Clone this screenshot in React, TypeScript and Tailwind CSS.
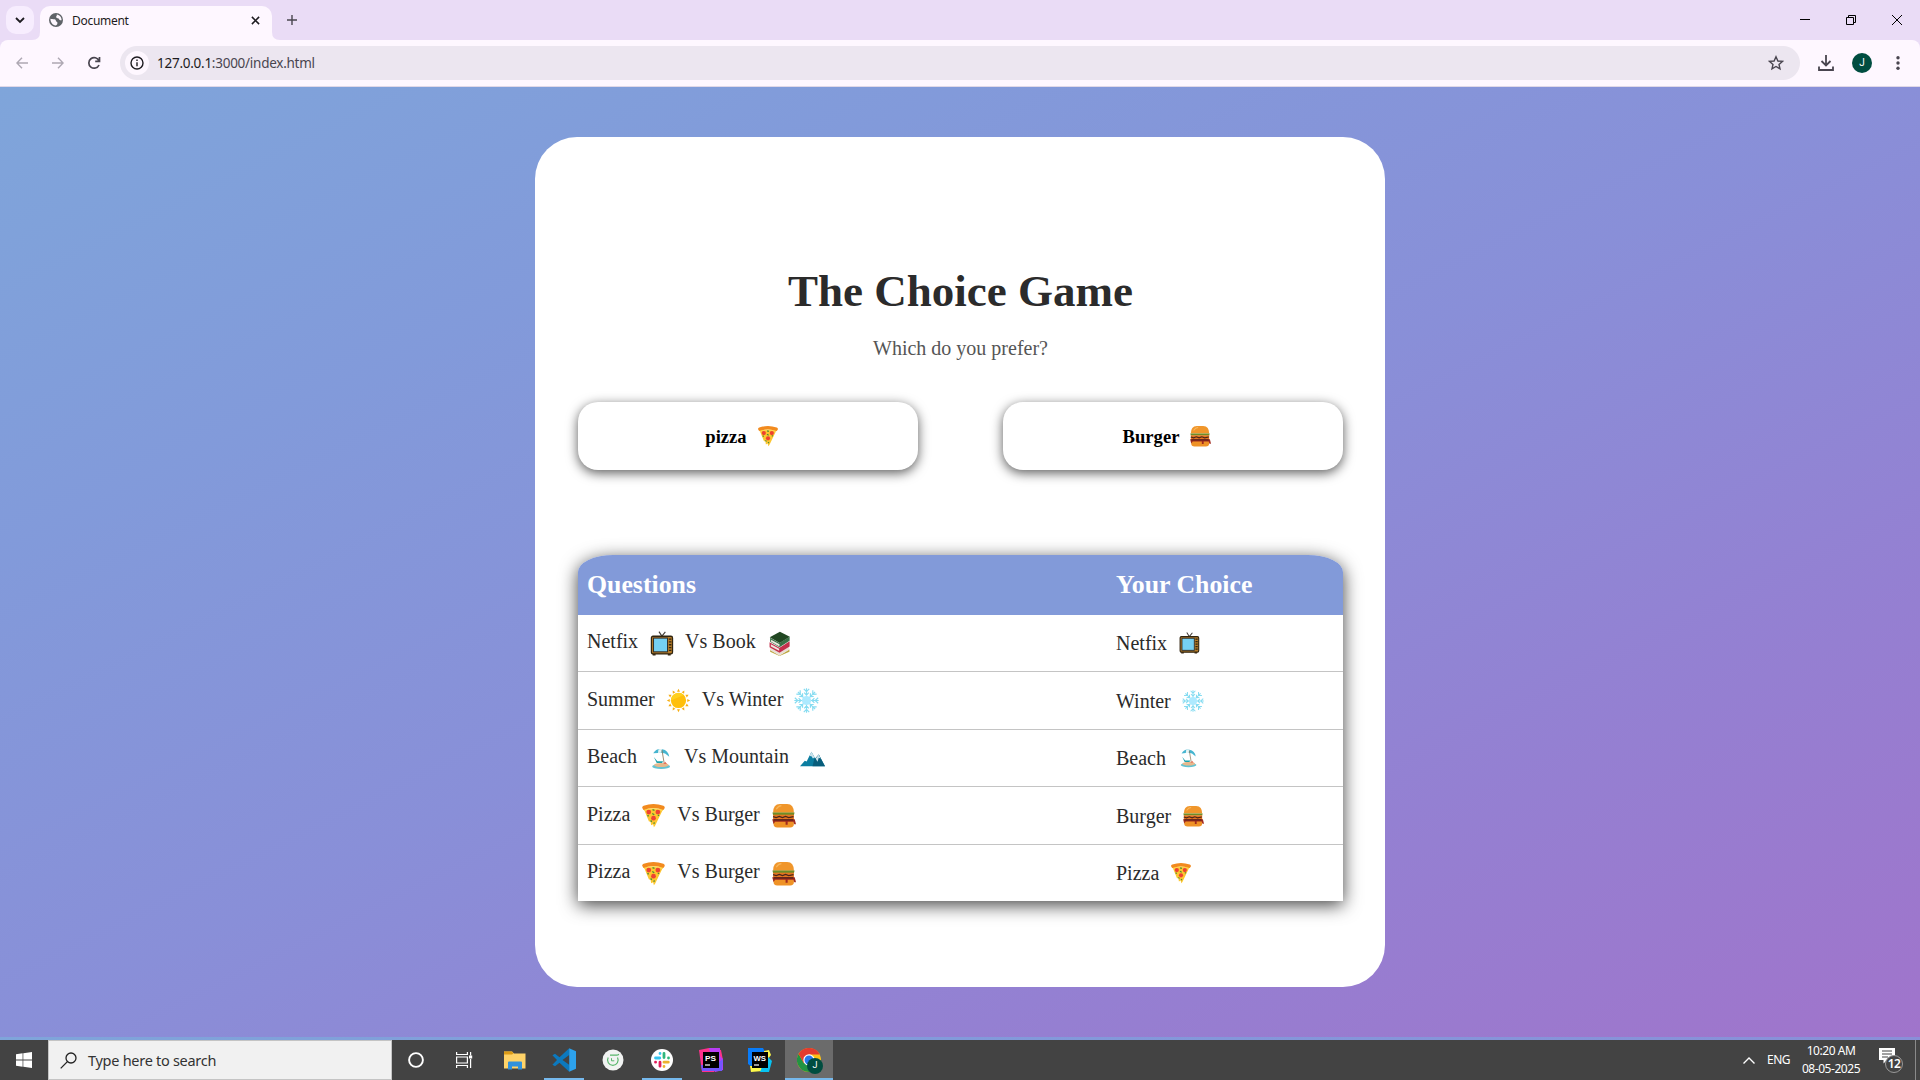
import React from "react";

const serif = "font-['Liberation_Serif',serif]";

type IconName = "pizza" | "burger" | "tv" | "book" | "sun" | "snow" | "beach" | "mountain";

function Pizza() {
  return (
    <g transform="translate(.6 .4) scale(.95 .97)">
      <path d="M2 5 L22 5 L13.6 22 L12.4 23.5 L11.6 20.5 L9.6 21.5 L9 18 L7.4 18 Z" fill="#fdc62f" />
      <path d="M.6 4.4 Q.4 3 2 2.4 Q12-1 22 2.4 Q23.8 3.1 23.2 4.8 L22 6.4 Q12 2.8 1.8 6.4 Z" fill="#f28a1e" />
      <path d="M2.6 7 Q12 3.4 21.4 7" fill="none" stroke="#ffd95a" strokeWidth="1" />
      <circle cx="7.2" cy="8.6" r="2.4" fill="#ee4232" />
      <circle cx="16.4" cy="8.6" r="2.4" fill="#ee4232" />
      <circle cx="12" cy="14.6" r="2.4" fill="#ee4232" />
      <path d="M11 6.2l2 .6M10.8 10l2 1.2M5.8 11.8l1.4.8M16.4 12.2l1.2-.8M9 17l1.4 1M12 19.8l1.2-.8" stroke="#4b8b35" strokeWidth="1.3" />
    </g>
  );
}

function Burger() {
  return (
    <>
      <rect x="2.4" y="16" width="19.6" height="7.4" rx="3.6" fill="#ef9226" />
      <path d="M2 9.4 Q2 1 8.500 1 H15.500 Q22 1 22 9.400 Z" fill="#f0962b" />
      <path d="M5 6 Q7 2.8 10 2.6" fill="none" stroke="#f8b65b" strokeWidth="1.2" />
      <path d="M1.4 9.2 H22.6 L22 11.4 H2 Z" fill="#6c8d29" />
      <path d="M2 11.2 H22 V16 H2 Z" fill="#e5761f" />
      <path d="M2 13 l3 1 3-1.2 3 1.2 3-1.2 3 1.2 4.6-1" fill="none" stroke="#4a251b" strokeWidth="1.2" />
      <path d="M1.2 15.6 H22.8 L24 20.4 H22.4 L21.4 18 H16 V20.8 H14 V18 H4 L2.4 20.2 Z" fill="#a12a1f" />
      <path d="M2.500 16.2 H21.500" stroke="#522019" strokeWidth="1.3" />
    </>
  );
}

function Tv() {
  return (
    <g transform="translate(1.200 0) scale(.93 1)">
      <path d="M9 .6 L12 5 L15.6 .8" fill="none" stroke="#443f3a" strokeWidth="1.2" />
      <path d="M4 21.5v2M19.6 21.5v2" stroke="#3b2b18" strokeWidth="3" />
      <rect x="1.2" y="5" width="21.8" height="17" rx="1.6" fill="#b37a28" stroke="#30240f" strokeWidth="1.3" />
      <rect x="3.4" y="6.8" width="14.4" height="13.2" fill="#75d0f2" stroke="#2f2d2a" strokeWidth="1" />
      <path d="M19.200 7.800h2.600M19.200 10.400h2.600M19.200 13.200h2.600M19.200 16h2.600M19.200 18.600h2.600" stroke="#33260f" strokeWidth="1.3" />
    </g>
  );
}

function Book() {
  return (
    <g transform="translate(1.200 0) scale(.9 1)">
      <path d="M2 18 L12 23.6 L22.6 17.6 V19.8 L12 24 L2 20 Z" fill="#bda842" />
      <path d="M2 15.6 L12 20.6 L22.4 15 V18 L12 23.4 L2 18.4 Z" fill="#e9dfd5" />
      <path d="M1.4 10.8 L12 16 L22.8 9.8 V14.8 L12 20.8 L1.4 15.6 Z" fill="#c3304b" />
      <path d="M2.8 12.600 L11.6 17 V19 L2.8 14.8 Z" fill="#f0e5df" />
      <path d="M2 6.4 L12 11.4 L22.8 5.6 V9.4 L12 15.6 L2 10.2 Z" fill="#387145" />
      <path d="M3 8.400 L12 12.800 L12 14.8 L3 10.2 Z" fill="#eae8df" />
      <path d="M1.6 6 L12.4 .6 L23 5.4 L12.2 11.6 Z" fill="#214722" />
    </g>
  );
}

function Sun() {
  return (
    <>
      {[0, 30, 60, 90, 120, 150, 180, 210, 240, 270, 300, 330].map((a) => (
        <path key={a} d="M12 .8 L13.4 3.6 H10.6 Z" fill="#f7ae12" transform={`rotate(${a} 12 12)`} />
      ))}
      <circle cx="12" cy="12" r="7.3" fill="#ffbf0b" />
      <path d="M4.700 12 A7.3 7.3 0 0 1 17.2 6.8 Z" fill="#ffd01d" />
    </>
  );
}

function Snow() {
  return (
    <>
      {[0, 45, 90, 135, 180, 225, 270, 315].map((a) => (
        <path key={a} d="M12 10 V.3 M9.4 .8 L12 3.600 L14.6 .8 M9.800 4.400 L12 6.800 L14.2 4.400" fill="none" stroke="#86dcf1" strokeWidth="1.1" transform={`rotate(${a} 12 12)`} />
      ))}
      <circle cx="12" cy="12" r="4.4" fill="#aeeaff" />
    </>
  );
}

function Beach() {
  return (
    <>
      <path d="M5 7 Q8 1.8 13.6 3 Q19.6 4 20.4 10.4 L16.4 7.2 L12.8 6.4 L9.4 6.6 Z" fill="#46b5d0" />
      <path d="M10 3.4 Q10.6 2.4 13.6 3 L12.6 6.5 L9.6 6.6 Z" fill="#e8f5f5" />
      <path d="M13.4 4 L15.6 17" stroke="#8a785c" strokeWidth=".8" />
      <ellipse cx="12.6" cy="19.6" rx="8.6" ry="2.4" fill="#64c3d2" />
      <ellipse cx="12.8" cy="18.2" rx="7" ry="2" fill="#e6b88c" />
      <path d="M5.6 10.6 L9 14.6 H14.4 L13.6 16.4 H8.4 Z" fill="#1ca2ac" />
      <path d="M14.6 17.2 l2-2.2 1.6 2.2z" fill="#e7755c" />
    </>
  );
}

function Mountain() {
  return (
    <>
      <path d="M0 19.500 L4.6 14.2 L6.4 14.8 L11 5.400 L14.6 12 L16.2 10.6 L18 8.2 L24 19.500 Z" fill="#0b7da0" />
      <path d="M12 19.500 L13.6 13 L18 8.2 L24 19.500 Z" fill="#085d7b" />
      <path d="M11 5.400 L14 11 L12.4 12 L11 9.8 L9 9.6 Z M18 8.2 L19.8 12 L18 11.2 L16.8 15 L15 12 Z" fill="#cce3ec" />
    </>
  );
}

const pictures: Record<IconName, () => React.ReactElement> = {
  pizza: Pizza, burger: Burger, tv: Tv, book: Book, sun: Sun, snow: Snow, beach: Beach, mountain: Mountain,
};

function Pic({ name, className }: { name: IconName; className: string }) {
  const Drawing = pictures[name];
  return (
    <svg viewBox="0 0 24 24" className={`shrink-0 ${className}`}>
      <Drawing />
    </svg>
  );
}

type Row = { a: string; ai: IconName; b: string; bi: IconName; c: string; ci: IconName; h: string };

const rows: Row[] = [
  { a: "Netfix", ai: "tv", b: "Vs Book", bi: "book", c: "Netfix", ci: "tv", h: "h-[57px]" },
  { a: "Summer", ai: "sun", b: "Vs Winter", bi: "snow", c: "Winter", ci: "snow", h: "h-[58px]" },
  { a: "Beach", ai: "beach", b: "Vs Mountain", bi: "mountain", c: "Beach", ci: "beach", h: "h-[57px]" },
  { a: "Pizza", ai: "pizza", b: "Vs Burger", bi: "burger", c: "Burger", ci: "burger", h: "h-[58px]" },
  { a: "Pizza", ai: "pizza", b: "Vs Burger", bi: "burger", c: "Pizza", ci: "pizza", h: "h-[56px]" },
];

function Choice({ label, icon }: { label: string; icon: IconName }) {
  return (
    <button className="flex h-[68px] w-[340px] items-center justify-center rounded-[20px] bg-white pr-[12px] text-[18.600px] font-bold text-black shadow-[0_3px_12px_rgba(0,0,0,0.65)]">
      <span className="mt-[2px]">{label}</span>
      <Pic name={icon} className="ml-[10px] h-[22px] w-[22px]" />
    </button>
  );
}

function Browser() {
  return (
    <header className="h-[87px] shrink-0 bg-[#eadcf6] font-['Noto_Sans',sans-serif]">
      <div className="flex h-10">
        <div className="ml-[6px] mt-[6px] flex h-7 w-7 items-center justify-center rounded-[10px] bg-[#f7edfe]">
          <svg viewBox="0 0 10 10" className="h-[10px] w-[10px]" fill="none" stroke="#1d1b20" strokeWidth="1.8"><path d="M1 3l4 4 4-4" /></svg>
        </div>
        <svg viewBox="0 0 8 8" className="ml-[-2px] mt-8 h-2 w-2"><path d="M8 0v8H0Q8 8 8 0" fill="#fef7ff" /></svg>
        <div className="mt-[6px] flex h-[34px] w-[232px] items-center rounded-t-[10px] bg-[#fef7ff] pb-[6px] pl-[9px]">
          <svg viewBox="0 0 16 16" className="h-[14px] w-[14px]"><circle cx="8" cy="8" r="8" fill="#5f6368" /><path d="M1.6 6.6c3 1 5.6-.4 6.2 2 .5 2 2 1 1.8 3.4-.2 1.3-1 2-2 2.4-3.600-.5-6-3.800-6-7.800zM8.800 1.600c.8 1.400-1 2-.6 3.200.6 1.600 3 .6 3.400 2.200.3 1.200 1.400 1.400 2.800 1.200C14.600 4.800 12.400 2 8.800 1.600z" fill="#fef7ff" /></svg>
          <span className="ml-[9px] mt-[1px] text-[12px] tracking-[-0.3px] text-[#1d1b20]">Document</span>
          <svg viewBox="0 0 10 10" className="ml-auto mr-[12px] h-[9px] w-[9px]" stroke="#1d1b20" strokeWidth="1.7"><path d="M1 1l8 8M9 1L1 9" /></svg>
        </div>
        <svg viewBox="0 0 8 8" className="mt-8 h-2 w-2"><path d="M0 0v8h8Q0 8 0 0" fill="#fef7ff" /></svg>
        <svg viewBox="0 0 10 10" className="ml-[7px] mt-[15px] h-[10px] w-[10px]" stroke="#49454f" strokeWidth="1.4"><path d="M5 0v10M0 5h10" /></svg>
        <div className="ml-auto mr-[18px] mt-[14px] flex h-3 items-center gap-[36px]">
          <svg viewBox="0 0 10 10" className="h-[10px] w-[10px]" stroke="#000"><path d="M0 4.500h10" /></svg>
          <svg viewBox="0 0 10 10" className="h-[10px] w-[10px]" fill="none" stroke="#000"><path d="M.5 2.500h7v7h-7zM2.500 2.500v-2h7v7h-2" /></svg>
          <svg viewBox="0 0 10 10" className="h-[10px] w-[10px]" stroke="#000" strokeWidth="1"><path d="M0 0l10 10M10 0L0 10" /></svg>
        </div>
      </div>
      <div className="flex h-[47px] items-center rounded-t-[8px] border-b border-[#e0d8e8] bg-[#fef7ff] pb-px">
        <svg viewBox="0 0 12 12" className="ml-4 h-3 w-3" fill="none" stroke="#aea8b3" strokeWidth="1.4"><path d="M12 6H1M6 .7L.9 6 6 11.300" /></svg>
        <svg viewBox="0 0 12 12" className="ml-6 h-3 w-3" fill="none" stroke="#aea8b3" strokeWidth="1.4"><path d="M0 6h11M6 .7L11.100 6 6 11.300" /></svg>
        <svg viewBox="0 0 14 14" className="ml-[23px] h-[14px] w-[14px]" fill="none" stroke="#49454f" strokeWidth="1.700"><path d="M12 9A5.300 5.300 0 1 1 12 4.800M12.500 1v4.300H8.200" /></svg>
        <div className="ml-[19px] flex h-[34px] w-[1680px] items-center rounded-full bg-[#ece6f0]">
          <div className="ml-[5px] flex h-6 w-6 items-center justify-center rounded-full bg-[#fef7ff]">
            <svg viewBox="0 0 14 14" className="h-[14px] w-[14px]" fill="none" stroke="#1d1b20" strokeWidth="1.400"><circle cx="7" cy="7" r="6" /><path d="M7 6.200v4M7 3.600v1.400" /></svg>
          </div>
          <div className="ml-[8px] mt-[2px] text-[13.500px] tracking-[-0.26px] text-[#1d1b20]">127.0.0.1<span className="text-[#49454f]">:3000/index.html</span></div>
          <svg viewBox="0 0 16 16" className="ml-auto mr-[16px] h-4 w-4" fill="none" stroke="#49454f" strokeWidth="1.400"><path d="M8 1.800l1.900 4.200 4.500.4-3.400 3 1 4.500L8 11.500l-4 2.400 1-4.500-3.400-3 4.500-.4z" /></svg>
        </div>
        <svg viewBox="0 0 16 16" className="ml-[18px] h-4 w-4" fill="none" stroke="#49454f" strokeWidth="1.800"><path d="M8 0v10M3.500 6L8 10.500 12.500 6M1 11.500V15h14v-3.500" /></svg>
        <div className="ml-[18px] flex h-5 w-5 items-center justify-center rounded-full bg-[#004d40] font-['Roboto',sans-serif] text-[10px] text-white">J</div>
        <svg viewBox="0 0 4 14" className="ml-[24px] h-[14px] w-1" fill="#49454f"><circle cx="2" cy="1.700" r="1.700" /><circle cx="2" cy="7" r="1.700" /><circle cx="2" cy="12.300" r="1.700" /></svg>
      </div>
    </header>
  );
}

function Page() {
  return (
    <main className={`${serif} flex h-[953px] shrink-0 justify-center bg-[linear-gradient(to_bottom_right,#7fa5da,#829ada_25%,#898fd8_50%,#9480d2_75%,#a074cb)] bg-[length:100%_950px] pt-[50px]`}>
      <div className="h-[850px] w-[850px] rounded-[42px] bg-white pl-[43px] pr-[42px] pt-[126px]">
        <h1 className="text-center text-[45px] font-bold leading-[56px] text-[#2b2b2b]">The Choice Game</h1>
        <p className="mt-[18px] text-center text-[20px] leading-[22px] text-[#555]">Which do you prefer?</p>
        <div className="mt-[43px] flex justify-between">
          <Choice label="pizza" icon="pizza" />
          <Choice label="Burger" icon="burger" />
        </div>
        <div className="mt-[85px] h-[346px] rounded-t-[35px_17px] bg-white shadow-[0_4px_18px_rgba(0,0,0,0.75)]">
          <div className="flex h-[60px] rounded-t-[35px_17px] bg-[#829ad9] text-[25.800px] font-bold leading-[60px] text-white">
            <div className="w-[529px] pl-[9px]">Questions</div>
            <div className="pl-[9px]">Your Choice</div>
          </div>
          {rows.map((r, i) => (
            <div key={i} className={`flex text-[20px] leading-[24px] text-[#2b2b2b] ${r.h} ${i < 4 ? "border-b border-[#c4c4c4]" : ""}`}>
              <div className="flex w-[529px] items-center pl-[9px]">
                <span className="mb-[4px]">{r.a}</span>
                <Pic name={r.ai} className="ml-[11px] h-[25px] w-[25px]" />
                <span className="mb-[4px] ml-[11px]">{r.b}</span>
                <Pic name={r.bi} className="ml-[11px] h-[25px] w-[25px]" />
              </div>
              <div className="flex items-center pl-[9px]">
                <span>{r.c}</span>
                <Pic name={r.ci} className="ml-[11px] h-[22px] w-[22px]" />
              </div>
            </div>
          ))}
        </div>
      </div>
    </main>
  );
}

function AppSlot({ children, active, lit }: { children: React.ReactNode; active?: boolean; lit?: boolean }) {
  return (
    <div className={`ml-px flex h-10 w-12 flex-col items-center ${lit ? "bg-[#6b6b6b]" : ""}`}>
      <div className="flex h-[38px] items-center pt-[2px]">{children}</div>
      <div className={`h-[2px] ${lit ? "w-12" : "w-10"} ${active || lit ? "bg-[#76b9ed]" : ""}`} />
    </div>
  );
}

function Jet({ text, a, b, c }: { text: string; a: string; b: string; c: string }) {
  return (
    <svg viewBox="0 0 24 24" className="h-6 w-6">
      <path d="M0 2L10 0l12 2 2 10-9 12H3z" fill={a} />
      <path d="M10 0h11v8l3 3v11l-8 2z" fill={b} />
      <path d="M2 17h14l8-6-1 12H3z" fill={c} />
      <rect x="4" y="4" width="16" height="16" fill="#000" />
      <text x="6" y="12.500" fontSize="8" fontWeight="700" fontFamily="Liberation Sans, sans-serif" textLength="11" lengthAdjust="spacingAndGlyphs" fill="#fff">{text}</text>
      <path d="M6 17h5" stroke="#fff" strokeWidth="1.200" />
    </svg>
  );
}

function WebStorm() {
  return (
    <svg viewBox="0 0 24 24" className="h-6 w-6">
      <path d="M0 0h15l2 4v15H4L0 16z" fill="#087cfa" />
      <path d="M16 3l5-1 2 5-3 4h-4z" fill="#fcf84a" />
      <path d="M2 18h11l2 5-12 1z" fill="#fcf84a" />
      <path d="M20 9l4 4-3 11h-9l2-5h6z" fill="#07c3f2" />
      <rect x="4" y="4" width="16" height="16" fill="#000" />
      <text x="5.500" y="12.500" fontSize="8" fontWeight="700" fontFamily="Liberation Sans, sans-serif" textLength="12.500" lengthAdjust="spacingAndGlyphs" fill="#fff">WS</text>
      <path d="M6 17h5" stroke="#fff" strokeWidth="1.200" />
    </svg>
  );
}

function Taskbar() {
  return (
    <footer className="flex h-10 shrink-0 bg-[#434343] font-['Noto_Sans',sans-serif] text-white">
      <div className="flex h-10 w-12 items-center justify-center">
        <svg viewBox="0 0 16 16" className="h-4 w-4" fill="#fff"><path d="M0 2.200l6.600-.9v6.300H0zM7.300 1.200L16 0v7.600H7.300zM0 8.400h6.600v6.300L0 13.800zM7.300 8.400H16V16l-8.700-1.200z" /></svg>
      </div>
      <div className="flex h-10 w-[344px] items-center border border-[#c4c4c4] bg-[#f1f1f1] text-[14.500px] text-[#333]">
        <svg viewBox="0 0 17 17" className="ml-[11px] h-[17px] w-[17px]" fill="none" stroke="#222" strokeWidth="1.300"><circle cx="11" cy="6" r="5" /><path d="M7.400 9.600L.7 16.400" /></svg>
        <span className="ml-[11px] mt-[2px] tracking-[-0.28px]">Type here to search</span>
      </div>
      <div className="flex h-10 w-12 items-center justify-center">
        <svg viewBox="0 0 16 16" className="h-4 w-4" fill="none" stroke="#fff" strokeWidth="1.900"><circle cx="8" cy="8" r="6.900" /></svg>
      </div>
      <div className="mr-[2px] flex h-10 w-12 items-center justify-center">
        <svg viewBox="0 0 17 16" className="h-4 w-[17px]" fill="none" stroke="#fff" strokeWidth="1.200"><path d="M.6 0v2.500h10.800V0M.6 5h10.800v6H.6zM.6 16v-2.500h10.800V16M14.600 0v3.500M14.600 7v9" /><path d="M13 3.500h3.200v3H13z" fill="#fff" stroke="none" /></svg>
      </div>
      <AppSlot>
        <svg viewBox="0 0 22 19" className="h-[19px] w-[22px]"><path d="M0 .500h8l2 2h11.500V17.500H0z" fill="#ffd368" /><path d="M0 .500h8l1.500 2L8 3.500H0z" fill="#dc9b16" /><path d="M4 18.500v-7q0-1 1-1h12q1 0 1 1v7h-4v-3H8v3z" fill="#3191dc" /></svg>
      </AppSlot>
      <AppSlot active>
        <svg viewBox="0 0 24 24" className="h-6 w-6"><path d="M17.200.3L7.500 9.200 3 5.800.4 7.200 5 12 .4 16.800 3 18.200l4.500-3.400 9.700 8.900L17.500 17 10.500 12l7-5.200z" fill="#0c79be" /><path d="M17.200.3L24 3.300v17.400l-6.800 3z" fill="#2da2ed" /></svg>
      </AppSlot>
      <AppSlot>
        <svg viewBox="0 0 22 22" className="h-[22px] w-[22px]"><circle cx="11" cy="11" r="10.500" fill="#f1f3f2" /><path d="M6.200 8.500a5.300 5.300 0 1 0 9.300 0M8 6.200h7l2-.8" fill="none" stroke="#58b66b" strokeWidth="1.200" /><path d="M9.500 9.200v2.600h2.800" fill="none" stroke="#58b66b" /></svg>
      </AppSlot>
      <AppSlot active>
        <svg viewBox="0 0 22 22" className="h-[22px] w-[22px]" fill="none" strokeWidth="2.800" strokeLinecap="round"><circle cx="11" cy="11" r="11" fill="#fff" /><path d="M9 4.500v.1M4.500 9h4.300" stroke="#36c5f0" /><path d="M13 4.500v4M17.500 9v.1" stroke="#2eb67d" /><path d="M13 13.200h4.300M13 17.400v.1" stroke="#ecb22e" /><path d="M9 13.200v4M4.500 13.200h.1" stroke="#e01e5a" /></svg>
      </AppSlot>
      <AppSlot><Jet text="PS" a="#ff318c" b="#b83df5" c="#7256ff" /></AppSlot>
      <AppSlot><WebStorm /></AppSlot>
      <AppSlot lit>
        <div className="relative h-6 w-6">
          <svg viewBox="0 0 24 24" className="h-6 w-6"><circle cx="12" cy="12" r="12" fill="#fbc116" /><path d="M1.600 6A12 12 0 0 0 12 24L17.200 15 12 12 6.800 15z" fill="#229342" /><path d="M12 12V6.500h10.700A12 12 0 0 0 1.600 6l5.200 9z" fill="#e33b2e" /><circle cx="12" cy="12" r="5.700" fill="#fff" /><circle cx="12" cy="12" r="4.500" fill="#2878e8" /></svg>
          <div className="absolute left-[10px] top-[10px] flex h-4 w-4 items-center justify-center rounded-full bg-[#004d40] font-['Roboto',sans-serif] text-[9px] text-white">J</div>
        </div>
      </AppSlot>
      <div className="ml-auto flex h-10 items-center text-[12px]">
        <svg viewBox="0 0 12 7" className="h-[7px] w-3" fill="none" stroke="#fff" strokeWidth="1.400"><path d="M.5 6.500L6 1l5.500 5.500" /></svg>
        <span className="ml-[12px] w-[24px] tracking-[-0.5px]">ENG</span>
        <div className="ml-[9px] w-[62px] whitespace-nowrap text-center leading-[18px] tracking-[-0.45px]"><div>10:20 AM</div><div>08-05-2025</div></div>
        <div className="relative ml-[17px] h-6 w-[25px]">
          <svg viewBox="0 0 16 16" className="h-4 w-4"><path d="M0 0h16v12h-8l-3.500 3.500V12H0z" fill="#fff" /><path d="M3 3h10M3 6h10M3 9h6" stroke="#434343" /></svg>
          <div className="absolute left-[6px] top-[7px] flex h-[18px] w-[18px] items-center justify-center rounded-full border border-[#999] bg-[#434343] text-[12px] font-semibold tracking-[-0.5px]">12</div>
        </div>
        <div className="ml-[11px] h-10 w-px bg-[#8a8a8a]" />
        <div className="w-1" />
      </div>
    </footer>
  );
}

export default function App() {
  return (
    <div className="flex h-[1080px] w-[1920px] flex-col overflow-hidden">
      <Browser />
      <Page />
      <Taskbar />
    </div>
  );
}
